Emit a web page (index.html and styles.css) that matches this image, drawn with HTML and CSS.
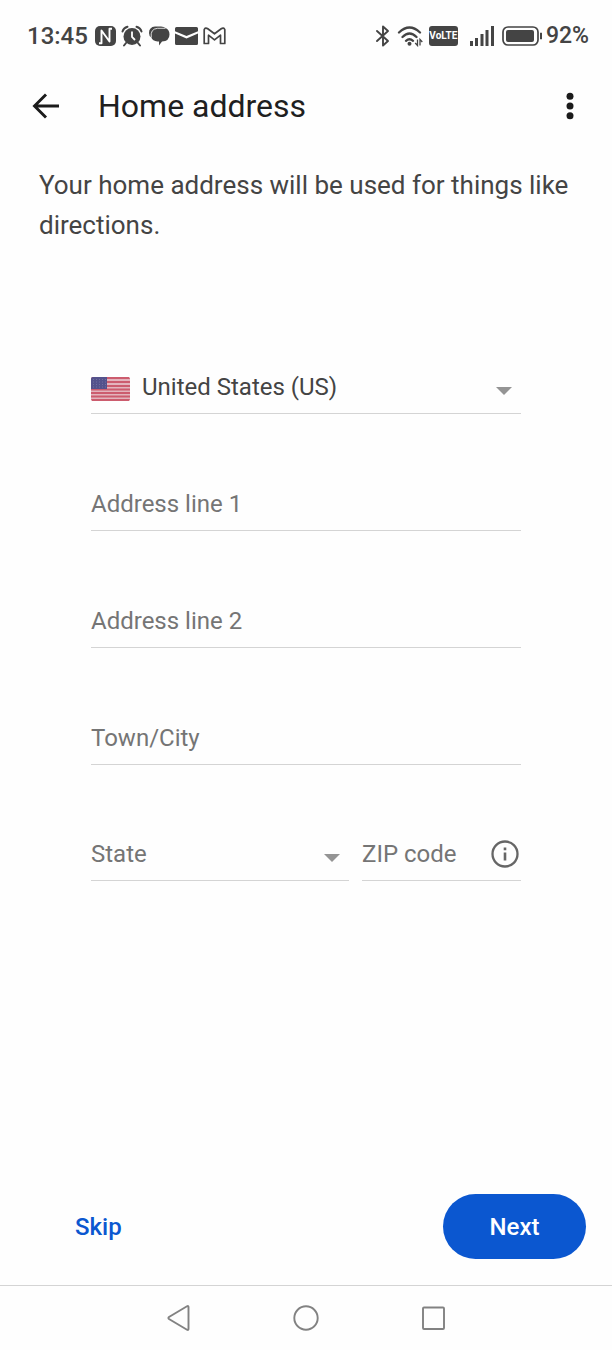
FILE: index.html
```html
<!DOCTYPE html>
<html lang="en">
<head>
<meta charset="utf-8">
<meta name="viewport" content="width=device-width, initial-scale=1">
<title>Home address</title>
<link rel="stylesheet" href="styles.css">
</head>
<body>
<div class="status">
  <div class="status-left">
    <span class="clock">13:45</span>
    <svg width="21" height="20" viewBox="0 0 21 20"><rect width="21" height="20" rx="5" fill="#444"/><path d="M4 17.200h2.500V4.500L14.500 15.500V2.800H17" fill="none" stroke="#fff" stroke-width="1.900" stroke-linejoin="round"/></svg>
    <svg width="22" height="22" viewBox="0 0 22 22"><circle cx="11" cy="11.500" r="8.500" fill="#444"/><path d="M1.500 6.500Q2.500 3 6.500 1.800M20.500 6.500Q19.500 3 15.500 1.800M5 18l-2 2.500M17 18l2 2.500" fill="none" stroke="#444" stroke-width="2" stroke-linecap="round"/><path d="M11 6.500v5.500l3 3" fill="none" stroke="#fff" stroke-width="1.800"/></svg>
    <svg width="22" height="22" viewBox="0 0 22 22"><path d="M1 8Q1 2 7 1.500h6Q16 1.500 17.500 3Q21.500 4.500 21.500 9.500Q21.500 16 14 16.500L11 20.500V16.500H9.500Q4.500 16 3.300 12.500Q1 11 1 8z" fill="#444"/><path d="M3.300 12.500Q2 4 9.500 3.300H17.500" fill="none" stroke="#fff" stroke-width=".8"/></svg>
    <svg width="23" height="18" viewBox="0 0 23 18"><path d="M0 1.500Q0 0 1.500 0h20Q23 0 23 1.500v2.700L11.500 9 0 4.200zM0 6.500l11.500 5L23 6.500v10q0 1.500-1.500 1.500h-20Q0 18 0 16.500z" fill="#444"/></svg>
    <svg width="23" height="18" viewBox="0 0 23 18"><path d="M1.200 16.500V2.500q1.200-2.500 3.600-.7l6.700 5 6.700-5q2.400-1.800 3.600.7v14h-4.300V8.200l-6 4.600-6-4.600v8.300z" fill="none" stroke="#444" stroke-width="1.700" stroke-linejoin="round"/></svg>
  </div>
  <div class="status-right">
    <svg width="16" height="22" viewBox="0 0 16 22"><path d="M2 6l11 10-5 4.500v-19L13 6 2 16" fill="none" stroke="#444" stroke-width="1.900" stroke-linejoin="round" stroke-linecap="round"/></svg>
    <svg width="26" height="22" viewBox="0 0 26 22"><path d="M2 7.500q10.500-10 21 0M5.500 12q7-7 14 0M9 15.800q3.500-3 7 0" fill="none" stroke="#444" stroke-width="2.300" stroke-linecap="round"/><circle cx="12.500" cy="18.700" r="2" fill="#444"/><path d="M20.500 14.500v6l-2.300-2.500M23 20.500v-6l2.300 2.500" fill="none" stroke="#444" stroke-width="1.300"/></svg>
    <span class="volte">VoLTE</span>
    <svg class="signal" width="24" height="20" viewBox="0 0 24 20"><path d="M0 15h3v5H0zM5 12h3v8H5zM10.500 8h3v12h-3zM15.500 4h3v16h-3zM21 0h3v20h-3z" fill="#444"/></svg>
    <svg class="battery" width="41" height="20" viewBox="0 0 41 20"><rect x="1" y="1" width="35" height="18" rx="5" fill="none" stroke="#444" stroke-width="1.700"/><rect x="4" y="4" width="28" height="12" rx="2" fill="#444"/><path d="M38.500 7h1v6h-1z" fill="#444" stroke="#444"/></svg>
    <span class="clock">92%</span>
  </div>
</div>
<header class="appbar">
  <button class="icon-button" type="button" aria-label="Back"><svg width="28" height="28" viewBox="0 0 28 28"><path d="M27 14H3M14 2.500L2.500 14 14 25.500" fill="none" stroke="#1b1b1b" stroke-width="2.900"/></svg></button>
  <h1>Home address</h1>
  <button class="icon-button" type="button" aria-label="More options"><svg width="8" height="28" viewBox="0 0 8 28"><g fill="#1b1b1b"><circle cx="4" cy="4.200" r="3.500"/><circle cx="4" cy="14" r="3.500"/><circle cx="4" cy="23.800" r="3.500"/></g></svg></button>
</header>
<main>
  <p class="intro">Your home address will be used for things like directions.</p>
  <form class="form" id="address">
    <div class="field country">
      <svg width="39" height="28" viewBox="0 0 39 28"><g transform="translate(0 4)"><rect width="39" height="24" rx="2" fill="#e3b4bd"/><path d="M1 0h37l1 2H0zM0 4h39v2H0zM0 8h39v2H0zM0 11.500h39v2H0zM0 15h39v2H0zM0 18.500h39v2H0zM0 22h39l-1 2H1z" fill="#cc5c6e"/><path d="M0 2q0-2 2-2h14v12H0z" fill="#54528c"/><path d="M2 2.500h13M2 5h13M2 7.500h13M2 10h13" stroke="#716f9f" stroke-width="1" stroke-dasharray="1 2"/></g></svg>
      <select aria-label="Country"><option>United States (US)</option></select>
      <svg class="caret" width="16" height="8" viewBox="0 0 16 8"><path d="M0 0h16L8 8z" fill="#949494"/></svg>
    </div>
    <div class="field"><input type="text" aria-label="Address line 1" placeholder="Address line 1"></div>
    <div class="field"><input type="text" aria-label="Address line 2" placeholder="Address line 2"></div>
    <div class="field"><input type="text" aria-label="Town/City" placeholder="Town/City"></div>
    <div class="pair">
      <div class="field state">
        <select aria-label="State"><option>State</option></select>
        <svg class="caret" width="16" height="8" viewBox="0 0 16 8"><path d="M0 0h16L8 8z" fill="#949494"/></svg>
      </div>
      <div class="field zip">
        <input type="text" aria-label="ZIP code" placeholder="ZIP code">
        <button class="info" type="button" aria-label="ZIP code information"><svg width="28" height="28" viewBox="0 0 28 28"><circle cx="14" cy="14" r="12.500" fill="none" stroke="#666" stroke-width="2.300"/><path d="M12.700 12.500h2.600v8h-2.600zM12.700 7.500h2.600v2.700h-2.600z" fill="#666"/></svg></button>
      </div>
    </div>
  </form>
</main>
<div class="actions">
  <button class="skip" type="button">Skip</button>
  <button class="next" type="submit" form="address">Next</button>
</div>
<nav class="navbar">
  <button class="icon-button" type="button" aria-label="System back"><svg width="26" height="28" viewBox="0 0 26 28"><path d="M23.500 3v22q0 1.500-1.500.7L4 15q-1.200-1 0-2L22 2.300q1.500-.8 1.500.7z" fill="none" stroke="#828282" stroke-width="1.900"/></svg></button>
  <button class="icon-button" type="button" aria-label="System home"><svg width="26" height="28" viewBox="0 0 26 28"><circle cx="13" cy="14" r="11.700" fill="none" stroke="#828282" stroke-width="1.900"/></svg></button>
  <button class="icon-button" type="button" aria-label="Recent apps"><svg width="26" height="28" viewBox="0 0 26 28"><rect x="2" y="3.500" width="21" height="21.500" rx="1" fill="none" stroke="#828282" stroke-width="1.900"/></svg></button>
</nav>
</body>
</html>
```
FILE: styles.css
```css
* { box-sizing: border-box; }
body {
  margin: 0;
  min-height: 100vh;
  display: flex;
  flex-direction: column;
  background: #fefefe;
  color: #444;
  font-family: Roboto, "Liberation Sans", sans-serif;
}
svg { display: block; flex: none; }
button { border: 0; padding: 0; background: none; font: inherit; cursor: pointer; }
.status {
  height: 72px;
  padding: 0 23px 0 27px;
  display: flex;
  align-items: center;
  justify-content: space-between;
}
.status-left, .status-right { display: flex; align-items: center; gap: 6px; }
.status-left { gap: 5px; }
.clock { font-size: 24px; font-weight: 500; line-height: 28px; }
.status-left .clock { margin-right: 2px; }
.signal { margin-left: 6px; }
.battery { margin-left: 2px; margin-right: -3px; }
.status-right .clock { font-size: 23px; }
.volte {
  width: 29px;
  height: 20px;
  border-radius: 3px;
  background: #444;
  color: #fff;
  font-size: 10px;
  font-weight: 700;
  line-height: 20px;
  text-align: center;
}
.appbar {
  height: 68px;
  padding: 0 38px 0 32px;
  display: flex;
  align-items: center;
}
.appbar h1 {
  flex: 1;
  margin: 0 0 0 38px;
  color: #1f1f1f;
  font-size: 32px;
  font-weight: 400;
  line-height: 40px;
}
main { flex: 1; }
.intro {
  margin: 0;
  padding: 25px 39px 0;
  font-size: 26px;
  line-height: 40px;
}
.form {
  padding: 116px 91px 0;
  display: flex;
  flex-direction: column;
  gap: 64px;
}
.field {
  position: relative;
  height: 53px;
  display: flex;
  align-items: center;
  border-bottom: 1px solid #d4d4d4;
}
.field input, .field select {
  width: 100%;
  min-width: 0;
  height: 52px;
  padding: 0;
  border: 0;
  outline: 0;
  background: none;
  appearance: none;
  color: #757575;
  font: inherit;
  font-size: 24px;
}
.field input::placeholder { color: #757575; opacity: 1; }
.country { gap: 12px; }
.field.country select { color: #444; }
.caret {
  position: absolute;
  right: 9px;
  top: 26px;
  pointer-events: none;
}
.pair { display: flex; gap: 13px; margin-top: -1px; }
.state { flex: 258; }
.zip { flex: 159; }
.info { margin-right: 2px; }
.actions {
  padding: 0 26px 26px 75px;
  display: flex;
  align-items: center;
  justify-content: space-between;
  font-size: 24px;
  font-weight: 500;
}
.skip { color: #0b57d0; }
.next {
  min-width: 143px;
  height: 65px;
  border-radius: 33px;
  background: #0b57d0;
  color: #fff;
}
.navbar {
  height: 65px;
  border-top: 1px solid #d4d4d4;
  display: flex;
  align-items: center;
  justify-content: center;
  gap: 102px;
}
```
